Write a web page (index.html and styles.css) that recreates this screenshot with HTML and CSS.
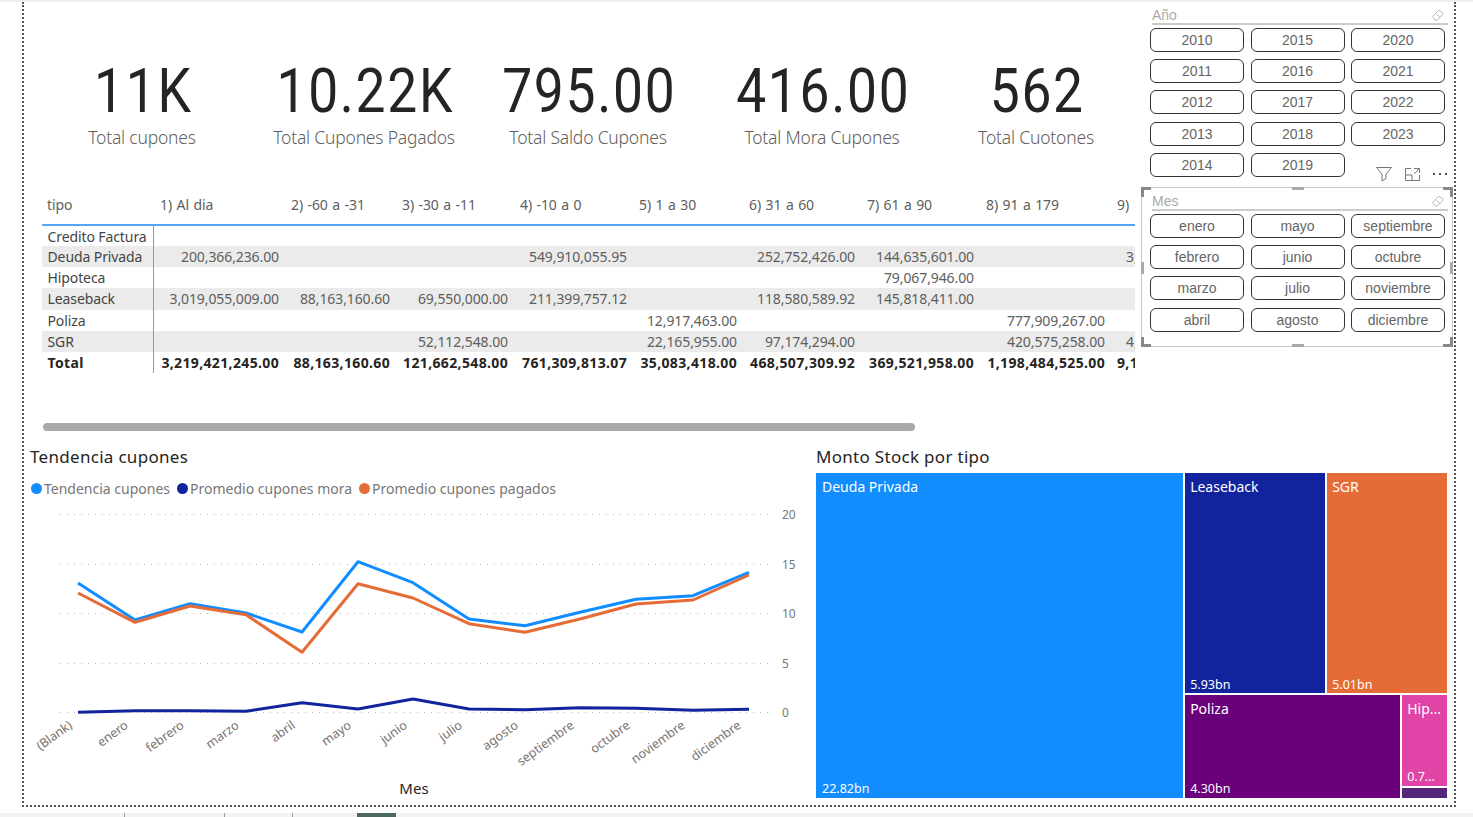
FILE: index.html
```html
<!DOCTYPE html>
<html lang="en">
<head>
    <meta charset="UTF-8">
    <meta name="viewport" content="width=device-width, initial-scale=1.0">
    <title>Cupones</title>
    <link rel="stylesheet" href="styles.css">
</head>
<body>

<div class="topline"></div>

<div class="canvas">
    <div class="upper">
        <div class="main">
            <div class="kpis">
                <div class="kpi"><div class="kpi-value"><span>11K</span></div><div class="kpi-label">Total cupones</div></div>
                <div class="kpi"><div class="kpi-value"><span>10.22K</span></div><div class="kpi-label">Total Cupones Pagados</div></div>
                <div class="kpi"><div class="kpi-value"><span>795.00</span></div><div class="kpi-label">Total Saldo Cupones</div></div>
                <div class="kpi"><div class="kpi-value"><span>416.00</span></div><div class="kpi-label">Total Mora Cupones</div></div>
                <div class="kpi"><div class="kpi-value"><span>562</span></div><div class="kpi-label">Total Cuotones</div></div>
            </div>

            <table class="matrix">
                <colgroup>
                    <col class="c-tipo"><col class="c-a"><col class="c-b"><col class="c-c"><col class="c-d"><col class="c-e"><col class="c-f"><col class="c-g"><col class="c-h"><col class="c-i">
                </colgroup>
                <thead>
                    <tr>
                        <th>tipo</th><th>1) Al dia</th><th>2) -60 a -31</th><th>3) -30 a -11</th><th>4) -10 a 0</th><th>5) 1 a 30</th><th>6) 31 a 60</th><th>7) 61 a 90</th><th>8) 91 a 179</th><th>9) 1</th>
                    </tr>
                </thead>
                <tbody>
                    <tr><td>Credito Factura</td><td></td><td></td><td></td><td></td><td></td><td></td><td></td><td></td><td></td></tr>
                    <tr class="band"><td>Deuda Privada</td><td>200,366,236.00</td><td></td><td></td><td>549,910,055.95</td><td></td><td>252,752,426.00</td><td>144,635,601.00</td><td></td><td class="cut">3,</td></tr>
                    <tr><td>Hipoteca</td><td></td><td></td><td></td><td></td><td></td><td></td><td>79,067,946.00</td><td></td><td></td></tr>
                    <tr class="band"><td>Leaseback</td><td>3,019,055,009.00</td><td>88,163,160.60</td><td>69,550,000.00</td><td>211,399,757.12</td><td></td><td>118,580,589.92</td><td>145,818,411.00</td><td></td><td></td></tr>
                    <tr><td>Poliza</td><td></td><td></td><td></td><td></td><td>12,917,463.00</td><td></td><td></td><td>777,909,267.00</td><td></td></tr>
                    <tr class="band"><td>SGR</td><td></td><td></td><td>52,112,548.00</td><td></td><td>22,165,955.00</td><td>97,174,294.00</td><td></td><td>420,575,258.00</td><td class="cut">4,</td></tr>
                    <tr class="total"><td>Total</td><td>3,219,421,245.00</td><td>88,163,160.60</td><td>121,662,548.00</td><td>761,309,813.07</td><td>35,083,418.00</td><td>468,507,309.92</td><td>369,521,958.00</td><td>1,198,484,525.00</td><td class="cut">9,1</td></tr>
                </tbody>
            </table>

            <div class="scrollbar"></div>
        </div>

        <div class="side">
            <div class="slicer year">
                <div class="slicer-head">
                    <span>Año</span>
                    <svg class="eraser" viewBox="0 0 14 14"><path d="M1.5 8.5 8 2l4.500 3.500-6 6.500H4z M4.500 5.500l4.500 4" fill="none" stroke="#bbb"/></svg>
                </div>
                <div class="pills">
                    <div class="pill">2010</div><div class="pill">2015</div><div class="pill">2020</div>
                    <div class="pill">2011</div><div class="pill">2016</div><div class="pill">2021</div>
                    <div class="pill">2012</div><div class="pill">2017</div><div class="pill">2022</div>
                    <div class="pill">2013</div><div class="pill">2018</div><div class="pill">2023</div>
                    <div class="pill">2014</div><div class="pill">2019</div>
                    <div class="tools">
                        <svg width="16" height="15" viewBox="0 0 16 15"><path d="M.5.500h15L10 7v4.500L6 14V7z" fill="none" stroke="#777"/></svg>
                        <svg width="15" height="13" viewBox="0 0 15 13"><path d="M6 .500H.5v12h14V7 M.5 7H7v5.500 M9 .500h5.500V5 M14 1 9 6" fill="none" stroke="#777"/></svg>
                        <svg width="15" height="3" viewBox="0 0 15 3"><path d="M0 0h2v2H0zM6 0h2v2H6zM12 0h2v2h-2z" fill="#555"/></svg>
                    </div>
                </div>
            </div>

            <div class="slicer month">
                <i class="corner tl"></i><i class="corner tr"></i><i class="corner bl"></i><i class="corner br"></i>
                <i class="grip top"></i><i class="grip bottom"></i><i class="grip left"></i><i class="grip right"></i>
                <div class="slicer-head">
                    <span>Mes</span>
                    <svg class="eraser" viewBox="0 0 14 14"><path d="M1.5 8.5 8 2l4.500 3.500-6 6.500H4z M4.500 5.500l4.500 4" fill="none" stroke="#bbb"/></svg>
                </div>
                <div class="pills">
                    <div class="pill">enero</div><div class="pill">mayo</div><div class="pill">septiembre</div>
                    <div class="pill">febrero</div><div class="pill">junio</div><div class="pill">octubre</div>
                    <div class="pill">marzo</div><div class="pill">julio</div><div class="pill">noviembre</div>
                    <div class="pill">abril</div><div class="pill">agosto</div><div class="pill">diciembre</div>
                </div>
            </div>
        </div>
    </div>

    <div class="lower">
        <div class="trend">
            <h3 class="visual-title">Tendencia cupones</h3>
            <div class="legend">
                <span class="legend-item"><i class="dot blue"></i>Tendencia cupones</span>
                <span class="legend-item"><i class="dot navy"></i>Promedio cupones mora</span>
                <span class="legend-item"><i class="dot orange"></i>Promedio cupones pagados</span>
            </div>
            <svg class="chart" width="790" height="312" viewBox="24 498 790 312">
                <g class="grid">
                    <line x1="60" x2="772" y1="514.500" y2="514.500"/>
                    <line x1="60" x2="772" y1="564.500" y2="564.500"/>
                    <line x1="60" x2="772" y1="613.500" y2="613.500"/>
                    <line x1="60" x2="772" y1="663.500" y2="663.500"/>
                    <line x1="60" x2="772" y1="712.500" y2="712.500"/>
                </g>
                <g class="y-labels">
                    <text x="782" y="519">20</text>
                    <text x="782" y="569">15</text>
                    <text x="782" y="618">10</text>
                    <text x="782" y="668">5</text>
                    <text x="782" y="717">0</text>
                </g>
                <polyline class="line l-blue" points="78,583 135,620 190,603.700 246,613 302,632 358,561.700 413,582.700 469,619 525,625.700 580,612.300 636,599.300 693,595.700 749,572.300"/>
                <polyline class="line l-orange" points="78,593 135,622.300 190,606 246,614.700 302,652.300 358,583.700 413,598 469,623.700 525,632.300 580,619 636,604 693,600 749,575"/>
                <polyline class="line l-navy" points="78,712.300 135,710.700 190,710.700 246,711.300 302,702.700 358,709 413,699 469,709 525,709.700 580,707.700 636,708.300 693,710.300 749,709.300"/>
                <g class="x-labels">
                    <text transform="translate(73 727) rotate(-36)">(Blank)</text>
                    <text transform="translate(129 727) rotate(-36)">enero</text>
                    <text transform="translate(185 727) rotate(-36)">febrero</text>
                    <text transform="translate(240 727) rotate(-36)">marzo</text>
                    <text transform="translate(296 727) rotate(-36)">abril</text>
                    <text transform="translate(352 727) rotate(-36)">mayo</text>
                    <text transform="translate(408 727) rotate(-36)">junio</text>
                    <text transform="translate(463 727) rotate(-36)">julio</text>
                    <text transform="translate(519 727) rotate(-36)">agosto</text>
                    <text transform="translate(575 727) rotate(-36)">septiembre</text>
                    <text transform="translate(631 727) rotate(-36)">octubre</text>
                    <text transform="translate(686 727) rotate(-36)">noviembre</text>
                    <text transform="translate(742 727) rotate(-36)">diciembre</text>
                </g>
                <text class="x-title" x="414" y="794">Mes</text>
            </svg>
        </div>

        <div class="stock">
            <h3 class="visual-title">Monto Stock por tipo</h3>
            <div class="treemap">
                <div class="tile deuda"><span>Deuda Privada</span><small>22.82bn</small></div>
                <div class="tree-right">
                    <div class="tree-top">
                        <div class="tile lease"><span>Leaseback</span><small>5.93bn</small></div>
                        <div class="tile sgr"><span>SGR</span><small>5.01bn</small></div>
                    </div>
                    <div class="tree-bottom">
                        <div class="tile poliza"><span>Poliza</span><small>4.30bn</small></div>
                        <div class="tree-small">
                            <div class="tile hipo"><span>Hip...</span><small>0.7...</small></div>
                            <div class="tile last"></div>
                        </div>
                    </div>
                </div>
            </div>
        </div>
    </div>
</div>

<div class="tabs">
    <i class="tick t1"></i><i class="tick t2"></i><i class="tick t3"></i><i class="active-tab"></i>
</div>

</body>
</html>
```

FILE: styles.css
```css
* {
    box-sizing: border-box;
}
html, body {
    height: 100%;
}
body {
    margin: 0;
    background: #fff;
    color: #605e5c;
    font-family: "Noto Sans", sans-serif;
    overflow: hidden;
}
.topline {
    height: 2px;
    background: #eee;
}
.canvas {
    width: 1434px;
    height: 805px;
    margin-left: 22px;
    border-left: 2px dotted #555;
    border-right: 2px dotted #555;
    border-bottom: 2px dotted #555;
}

/* top part */
.upper {
    display: flex;
    height: 441px;
}
.main {
    width: 1118px;
}
.kpis {
    display: grid;
    grid-template-columns: 238px 206px 242px 226px 202px;
    height: 187px;
    padding-top: 54px;
}
.kpi {
    text-align: center;
}
.kpi-value {
    font-family: Roboto, sans-serif;
    font-size: 62px;
    line-height: 69px;
    letter-spacing: 2px;
    color: #252423;
}
.kpi-value span {
    display: inline-block;
    transform: scaleX(.86);
}
.kpi-label {
    padding-right: 2px;
    font-size: 17.500px;
    font-weight: 300;
    line-height: 24px;
    letter-spacing: -.2px;
    color: #605e5c;
}

/* matrix */
.matrix {
    table-layout: fixed;
    width: 1093px;
    margin-left: 18px;
    border-collapse: collapse;
    font-size: 14px;
    letter-spacing: -.1px;
}
.c-tipo { width: 111px; }
.c-a { width: 131px; }
.c-b { width: 111px; }
.c-c { width: 118px; }
.c-d { width: 119px; }
.c-e { width: 110px; }
.c-f { width: 118px; }
.c-g { width: 119px; }
.c-h { width: 131px; }
.c-i { width: 25px; }
.matrix th {
    height: 36px;
    padding: 0 0 4px 7px;
    font-weight: 400;
    text-align: left;
    white-space: nowrap;
    overflow: hidden;
    letter-spacing: -.1px;
    word-spacing: 1px;
    color: #605e5c;
    border-bottom: 2px solid #57a6f5;
}
.matrix th:first-child {
    padding-left: 5px;
}
.matrix td {
    height: 21.150px;
    padding: 0 5px 0 0;
    text-align: right;
    white-space: nowrap;
    overflow: hidden;
    color: #605e5c;
}
.matrix td:first-child {
    padding-left: 5.500px;
    text-align: left;
    color: #444;
    border-right: 1px solid #57a6f5;
}
.matrix td.cut {
    padding: 0;
    text-align: left;
    text-indent: 16px;
}
.band td {
    background: #ebebeb;
}
.total td {
    font-weight: 700;
    letter-spacing: .35px;
    color: #252423;
}
.total td:first-child {
    color: #252423;
}
.total td.cut {
    text-indent: 7px;
}
.scrollbar {
    width: 872px;
    height: 8px;
    margin: 50px 0 0 19px;
    border-radius: 4px;
    background: #a9a9a9;
}

/* slicers */
.side {
    width: 312px;
    margin-left: -1px;
}
.slicer {
    position: relative;
    padding: 0 8px 0 9px;
}
.year {
    height: 185px;
    padding-top: 4px;
}
.month {
    height: 160px;
    padding: 4px 7px 0 8px;
    border: 1px solid #c8c8c8;
}
.slicer-head {
    display: flex;
    align-items: center;
    justify-content: space-between;
    height: 19px;
    margin: 0 -3px 3px 2px;
    border-bottom: 2px solid #ccc;
    font-family: "Liberation Sans", sans-serif;
    font-size: 14px;
    color: #aaa;
}
.eraser {
    width: 14px;
    height: 14px;
    margin-right: 3px;
}
.pills {
    display: grid;
    grid-template-columns: 94px 94px 94px;
    grid-auto-rows: 24px;
    column-gap: 6.500px;
    row-gap: 7.200px;
}
.pill {
    display: flex;
    align-items: center;
    justify-content: center;
    border: 1.500px solid #333;
    border-radius: 6px;
    font-family: "Liberation Sans", sans-serif;
    font-size: 14px;
    color: #666;
}
.tools {
    display: flex;
    align-items: center;
    justify-content: flex-end;
    gap: 13px;
    margin: 14px -3px -6px -4px;
}
.corner {
    position: absolute;
    width: 10px;
    height: 10px;
    border: 0 solid #888;
}
.corner.tl { left: -1px; top: -1px; border-width: 3px 0 0 3px; }
.corner.tr { right: -1px; top: -1px; border-width: 3px 3px 0 0; }
.corner.bl { left: -1px; bottom: -1px; border-width: 0 0 3px 3px; }
.corner.br { right: -1px; bottom: -1px; border-width: 0 3px 3px 0; }
.grip {
    position: absolute;
    background: #aaa;
}
.grip.top, .grip.bottom {
    left: 150px;
    width: 12px;
    height: 3px;
}
.grip.top { top: -1px; }
.grip.bottom { bottom: -1px; }
.grip.left, .grip.right {
    top: 74px;
    width: 3px;
    height: 12px;
}
.grip.left { left: -1px; }
.grip.right { right: -1px; }

/* bottom part */
.lower {
    display: flex;
    height: 362px;
}
.trend {
    width: 790px;
}
.visual-title {
    margin: 0;
    height: 30px;
    font-family: "Noto Sans", sans-serif;
    font-size: 17px;
    font-weight: 400;
    line-height: 28px;
    letter-spacing: .3px;
    color: #252423;
}
.trend .visual-title {
    padding-left: 6px;
}
.legend {
    display: flex;
    height: 25px;
    padding: 6px 0 0 7px;
    font-size: 14px;
    line-height: 20px;
    color: #777;
}
.legend-item {
    display: flex;
    align-items: center;
    margin-right: 7px;
}
.dot {
    width: 11px;
    height: 11px;
    margin-right: 2px;
    border-radius: 50%;
}
.dot.blue { background: #118dff; }
.dot.navy { background: #12239e; }
.dot.orange { background: #e66c37; }
.chart {
    display: block;
    margin-top: 0;
}
.grid line {
    stroke: #bbb;
    stroke-dasharray: 1 6;
}
.y-labels text {
    font-size: 12px;
    fill: #777;
}
.line {
    fill: none;
    stroke-width: 3;
    stroke-linejoin: round;
}
.l-blue { stroke: #118dff; }
.l-orange { stroke: #e66c37; }
.l-navy { stroke: #12239e; }
.x-labels text {
    font-size: 12.500px;
    fill: #7a7270;
    text-anchor: end;
}
.x-title {
    font-size: 15px;
    fill: #252423;
    text-anchor: middle;
}
.stock {
    width: 631px;
    margin-left: 2px;
}
.treemap {
    display: flex;
    gap: 2px;
    height: 325px;
}
.tile {
    display: flex;
    flex-direction: column;
    justify-content: space-between;
    padding: 4px 6px 1px 6px;
    overflow: hidden;
    font-size: 14px;
    color: #fff;
    white-space: nowrap;
}
.tile small {
    font-size: 12.500px;
}
.deuda {
    width: 369px;
    background: #118dff;
}
.tree-right {
    display: flex;
    flex: 1;
    flex-direction: column;
    gap: 2px;
}
.tree-top {
    display: flex;
    gap: 2px;
    height: 219.500px;
}
.tree-top .tile {
    padding-bottom: 0;
}
.lease {
    width: 140px;
    padding-left: 5px;
    background: #12239e;
}
.sgr {
    flex: 1;
    padding-left: 5px;
    background: #e66c37;
}
.tree-bottom {
    display: flex;
    flex: 1;
    gap: 2px;
}
.poliza {
    width: 215px;
    padding-left: 5px;
    background: #6b007b;
}
.tree-small {
    display: flex;
    flex: 1;
    flex-direction: column;
    gap: 2px;
}
.hipo {
    height: 91px;
    padding-left: 5px;
    background: #e044a7;
}
.last {
    flex: 1;
    padding: 0;
    background: #53277a;
}

/* page tabs strip */
.tabs {
    position: relative;
    height: 4px;
    margin-top: 6px;
    background: #f3f2f1;
}
.tick {
    position: absolute;
    top: 0;
    width: 1px;
    height: 4px;
    background: #999;
}
.t1 { left: 124px; }
.t2 { left: 224px; }
.t3 { left: 292px; }
.active-tab {
    position: absolute;
    top: 0;
    left: 357px;
    width: 39px;
    height: 4px;
    background: #4c6660;
}
```
